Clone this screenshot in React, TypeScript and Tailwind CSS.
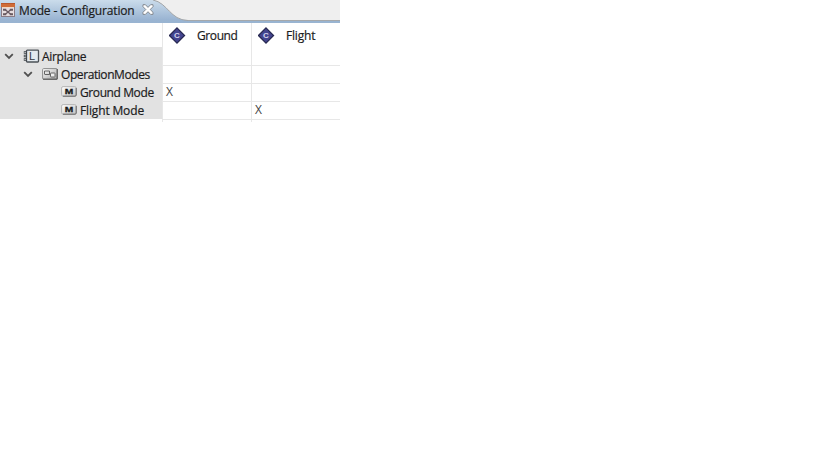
import React from "react";

function TableIcon() {
  return (
    <svg className="ml-px mt-[3px] block shrink-0" width="14" height="14" viewBox="0 0 14 14">
      <rect x="0.5" y="0.5" width="13" height="13" fill="#e6dddf" stroke="#8a7c85" />
      <rect x="0" y="0" width="14" height="4" fill="#cf6c38" />
      <path d="M0 .5H14" stroke="#b9572c" />
      <path d="M1 4.5H13" stroke="#f3d9c4" />
      <path d="M2 6.7H5.2M8.8 6.7H12M2 11.3H5.2M8.8 11.3H12" stroke="#68595f" strokeWidth="2" />
      <path d="M4 6.5L10 11.5M10 6.5L4 11.5" stroke="#6a5b63" strokeWidth="1.4" />
    </svg>
  );
}

function CloseIcon() {
  return (
    <svg className="ml-[8px] mt-[4px] block shrink-0" width="12" height="12" viewBox="0 0 12 12">
      <path
        d="M1 .7H3.4L6 3.4L8.6 .7H11V2.7L8.2 5.5L11 8.3V10.4H8.6L6 7.7L3.4 10.4H1V8.3L3.8 5.5L1 2.7Z"
        fill="#fff"
        stroke="#7b8087"
        strokeWidth="0.9"
      />
    </svg>
  );
}

function Diamond() {
  return (
    <svg className="block shrink-0" width="17" height="17" viewBox="0 0 17 17">
      <path d="M8 .9L15.6 8.5L8 16.1L.4 8.5Z" fill="#44458f" stroke="#25264f" strokeWidth="1.2" />
      <text x="8" y="11.4" textAnchor="middle" fontSize="8" fontWeight="bold" fontFamily="Liberation Sans, sans-serif" fill="#d4d4ec">
        C
      </text>
    </svg>
  );
}

function Chevron() {
  return (
    <svg className="block shrink-0" width="10" height="8" viewBox="0 0 10 8">
      <path d="M1.2 2.2L5 6L8.8 2.2" fill="none" stroke="#505050" strokeWidth="1.8" />
    </svg>
  );
}

function LogicalIcon() {
  return (
    <svg className="-mt-px block shrink-0" width="17" height="14" viewBox="0 0 17 14">
      <rect x="3.5" y="1.2" width="12" height="11.8" rx="0.8" fill="#e3e9ee" stroke="#4b5157" strokeWidth="1.3" />
      <path d="M0.8 3.5H3.8M0.8 7H3.8M0.8 10.5H3.8" stroke="#3f4448" strokeWidth="2.4" />
      <path d="M1.4 3.5H2.9M1.4 7H2.9M1.4 10.5H2.9" stroke="#c8ccd0" strokeWidth="0.9" />
      <text x="6" y="10.8" fontSize="11" fontFamily="Liberation Sans, sans-serif" fill="#33383d">
        L
      </text>
    </svg>
  );
}

function ModesIcon() {
  return (
    <svg className="-mt-px block shrink-0" width="16" height="12" viewBox="0 0 16 12">
      <defs>
        <linearGradient id="modes" x2="1" y2="1">
          <stop stopColor="#fff" />
          <stop offset="1" stopColor="#a4a4a4" />
        </linearGradient>
      </defs>
      <rect x="0.6" y="0.6" width="14.6" height="10.6" rx="1" fill="url(#modes)" stroke="#8b8b8b" />
      <path d="M15.2 1V11.2H1" fill="none" stroke="#505050" />
      <path d="M2.5 6V3H7.5V6.5H2.5M7.5 6H9" fill="none" stroke="#555" strokeWidth="0.9" />
      <rect x="8.5" y="5" width="4.5" height="4" rx="0.5" fill="#eee" stroke="#666" />
    </svg>
  );
}

function ModeIcon() {
  return (
    <svg className="-mt-px block shrink-0" width="16" height="11" viewBox="0 0 16 11">
      <defs>
        <linearGradient id="mode" x2="1" y2="1">
          <stop stopColor="#fff" />
          <stop offset="1" stopColor="#c4c4c4" />
        </linearGradient>
      </defs>
      <rect x="0.6" y="0.6" width="14.6" height="9.6" rx="1.5" fill="url(#mode)" stroke="#b5b5b5" />
      <path d="M15.2 2V9Q15.2 10.2 14 10.2H2" fill="none" stroke="#686868" />
      <text x="8" y="8.2" textAnchor="middle" fontSize="8" textLength="8.5" lengthAdjust="spacingAndGlyphs" fontWeight="bold" fontFamily="Liberation Sans, sans-serif" fill="#1a1a1a" stroke="#1a1a1a" strokeWidth="0.3">
        M
      </text>
    </svg>
  );
}

const label = "block whitespace-pre text-[12px] leading-[18px] [-webkit-text-stroke:0.2px]";
const cell = "w-[89px] shrink-0 border-l border-[#e7e7e7] pl-[3px] text-[12px] text-[#444]";

function Row({ children, a = "", b = "" }: { children: React.ReactNode; a?: string; b?: string }) {
  return (
    <div className="flex h-[18px]">
      <div className="flex w-[162px] shrink-0 items-center bg-[#e2e2e2]">{children}</div>
      <div className={`${cell} border-t leading-[16px]`}>{a}</div>
      <div className={`${cell} border-t leading-[16px]`}>{b}</div>
    </div>
  );
}

export default function App() {
  return (
    <div className="h-[460px] w-[819px] overflow-hidden bg-white font-['Open_Sans','Noto_Sans',sans-serif] text-[#1c1c1c]">
      <div className="w-[340px]">
        <div className="relative h-[23px] bg-[#efefef]">
          <svg className="absolute inset-0" width="340" height="23" viewBox="0 0 340 23">
            <defs>
              <linearGradient id="tab" x1="0" y1="0" x2="0" y2="1">
                <stop stopColor="#cbdceb" />
                <stop offset="0.85" stopColor="#9ab4d2" />
                <stop offset="1" stopColor="#99b4d1" />
              </linearGradient>
            </defs>
            <path d="M152 20.5H340" stroke="#a5a8ab" />
            <path d="M160 22H340" stroke="#99b4d1" strokeWidth="2" />
            <path d="M0 0H153C168 3 170 20 188 20.5V23H0Z" fill="url(#tab)" />
            <path d="M153 0C168 3 170 20 188 20.5" fill="none" stroke="#a2a5a8" />
          </svg>
          <div className="relative flex">
            <TableIcon />
            <span className={`${label} ml-[4px] mt-[2px] w-[115px] tracking-[-0.16px]`}>Mode - Configuration</span>
            <CloseIcon />
          </div>
        </div>
        <div className="flex h-[24px]">
          <div className="w-[162px] shrink-0" />
          <div className="flex w-[89px] shrink-0 items-center border-l border-[#e7e7e7] pl-[6px]">
            <Diamond />
            <span className={`${label} mt-[2px] ml-[11px] tracking-[-0.4px]`}>Ground</span>
          </div>
          <div className="flex w-[89px] shrink-0 items-center border-l border-[#e7e7e7] pl-[6px]">
            <Diamond />
            <span className={`${label} mt-[2px] ml-[11px] tracking-[-0.2px]`}>Flight</span>
          </div>
        </div>
        <div className="flex h-[18px]">
          <div className="flex w-[162px] shrink-0 items-center bg-[#e2e2e2] pl-[4px]">
            <Chevron />
            <div className="ml-[9px]"><LogicalIcon /></div>
            <span className={`${label} mt-px ml-[2px] tracking-[-0.3px]`}>Airplane</span>
          </div>
          <div className={cell} />
          <div className={cell} />
        </div>
        <Row>
          <div className="flex items-center pl-[23px]">
            <Chevron />
            <div className="ml-[9px]"><ModesIcon /></div>
            <span className={`${label} mt-px ml-[3px] tracking-[-0.42px]`}>OperationModes</span>
          </div>
        </Row>
        <Row a="X">
          <div className="flex items-center pl-[61px]">
            <ModeIcon />
            <span className={`${label} mt-px ml-[3px] tracking-[-0.4px]`}>Ground Mode</span>
          </div>
        </Row>
        <Row b="X">
          <div className="flex items-center pl-[61px]">
            <ModeIcon />
            <span className={`${label} mt-px ml-[3px] tracking-[-0.15px]`}>Flight Mode</span>
          </div>
        </Row>
        <div className="flex h-[3px]">
          <div className="w-[162px] shrink-0" />
          <div className={`${cell} border-t`} />
          <div className={`${cell} border-t`} />
        </div>
      </div>
    </div>
  );
}
